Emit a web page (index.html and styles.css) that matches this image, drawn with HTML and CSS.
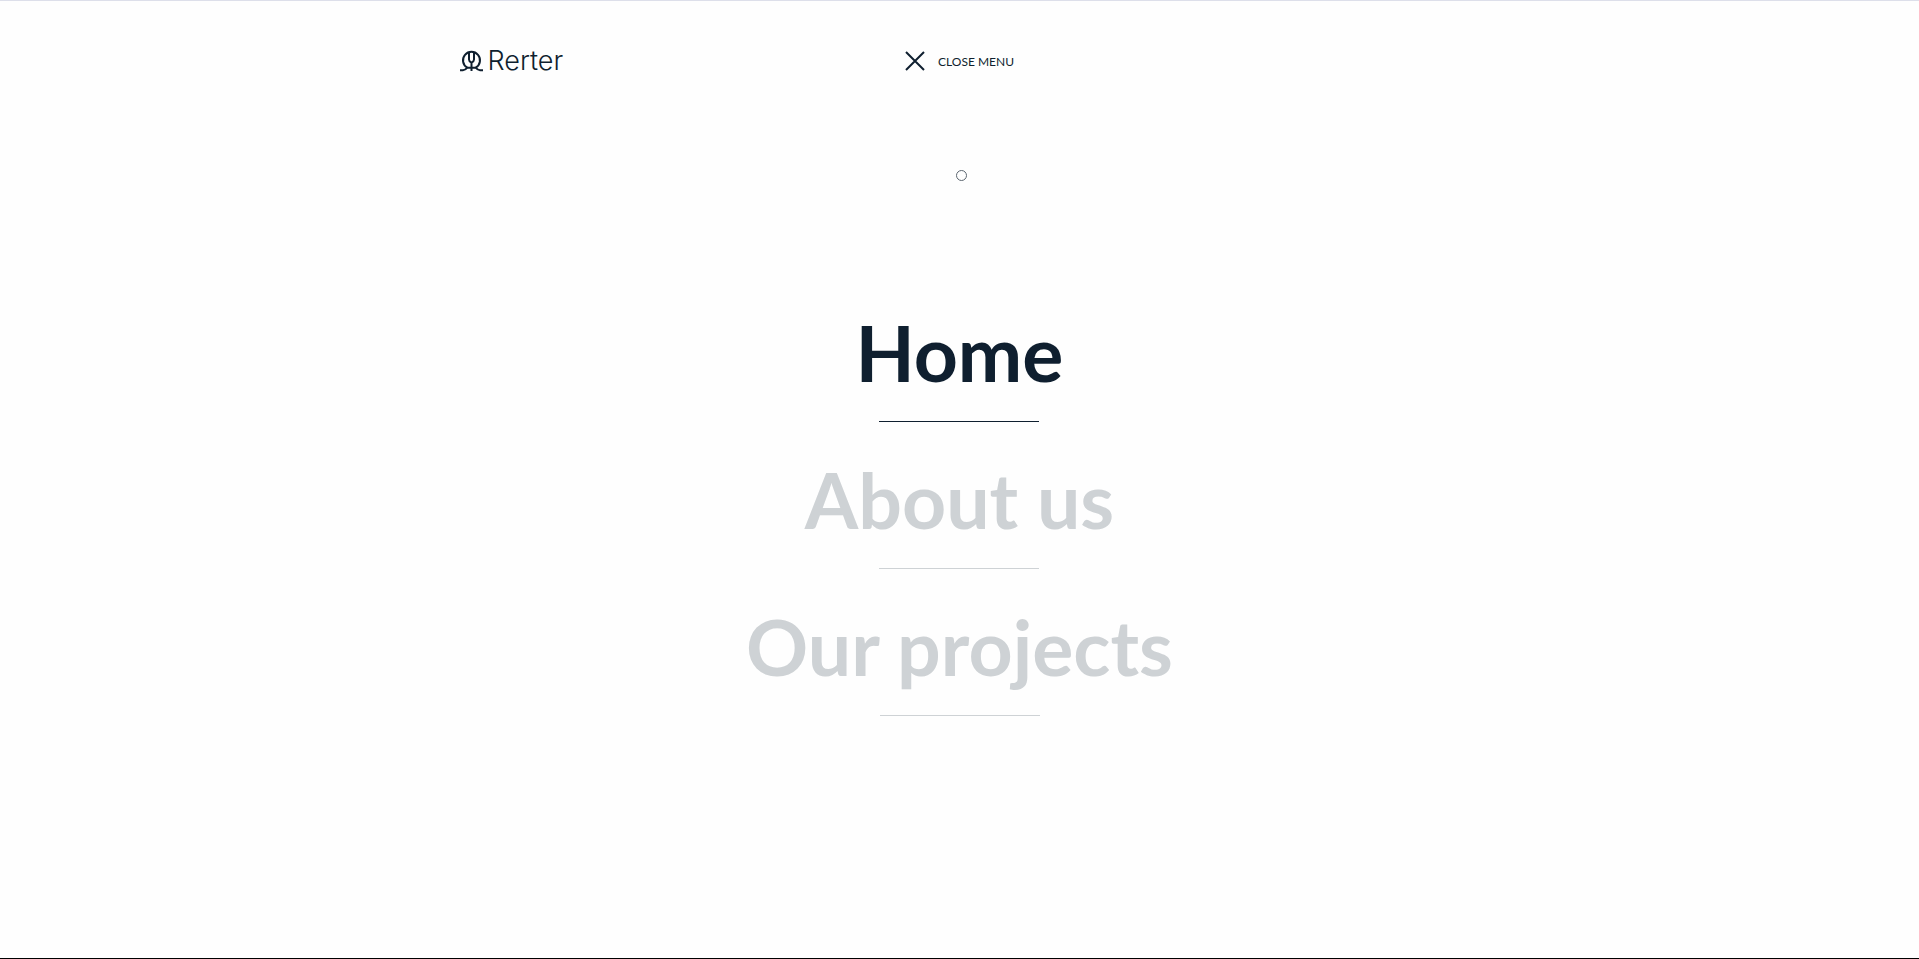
FILE: index.html
```html
<!DOCTYPE html>
<html lang="en">
<head>
<meta charset="utf-8">
<meta name="viewport" content="width=device-width, initial-scale=1">
<title>Rerter</title>
<link rel="stylesheet" href="styles.css">
</head>
<body>
<div class="page">
  <header class="header">
    <a class="logo" href="#">
      <svg class="logo-mark" viewBox="0 0 24 22" aria-hidden="true">
        <path d="M0 20.2H3Q5.2 20.2 7.2 17.6A8.5 8.5 0 1 1 15.8 17.6Q17.8 20.2 20 20.2H23"/>
        <path d="M7.2 17.8H15.8M11.5 12.5V21M9 2.5V9.4Q9 11.4 11.5 12.6Q14 11.4 14 9.4V2.5"/>
      </svg>
      <span class="logo-text">Rerter</span>
    </a>
    <button class="close" type="button">
      <svg class="close-mark" viewBox="0 0 20 20" aria-hidden="true"><path d="M1 1L19 19M19 1L1 19"/></svg>
      <span>CLOSE MENU</span>
    </button>
  </header>
  <nav class="menu" aria-label="Main">
    <a class="menu-link active" href="#">Home</a>
    <a class="menu-link" href="#about">About us</a>
    <a class="menu-link" href="#projects">Our projects</a>
  </nav>
  <span class="cursor" aria-hidden="true"></span>
</div>
</body>
</html>
```
FILE: styles.css
```css
* { box-sizing: border-box; }

body {
  margin: 0;
  background: #fefefe;
  color: #0f1f2f;
  font-family: Lato, "Liberation Sans", sans-serif;
}

.page {
  position: relative;
  min-height: 100vh;
  border-top: 1px solid #dddfea;
  border-bottom: 1px solid #000;
}

.header {
  display: grid;
  grid-template-columns: 1fr auto 1fr;
  align-items: center;
  max-width: 1000px;
  margin: 0 auto;
  padding-top: 44px;
}

.logo {
  display: flex;
  align-items: center;
  gap: 4px;
  color: inherit;
  text-decoration: none;
}

.logo-mark {
  width: 24px;
  height: 22px;
  fill: none;
  stroke: currentColor;
  stroke-width: 2;
}

.logo-text {
  font-family: Inter, "Liberation Sans", sans-serif;
  font-size: 27px;
  font-weight: 300;
  line-height: 32px;
}

.close {
  display: flex;
  align-items: center;
  gap: 13px;
  padding: 0;
  border: 0;
  background: none;
  color: inherit;
  font-family: inherit;
  font-size: 12px;
  cursor: pointer;
}

.close-mark {
  width: 20px;
  height: 20px;
  fill: none;
  stroke: currentColor;
  stroke-width: 2;
}

.menu {
  display: flex;
  flex-direction: column;
  align-items: center;
  gap: 32px;
  margin-top: 230px;
}

.menu-link {
  display: flex;
  flex-direction: column;
  align-items: center;
  gap: 24px;
  color: #ced2d5;
  font-size: 77px;
  font-weight: 700;
  line-height: 90px;
  text-decoration: none;
}

.menu-link::after {
  content: "";
  width: 160px;
  height: 1px;
  background: currentColor;
}

.menu-link.active { color: #0f1f2f; }

.cursor {
  position: absolute;
  top: 169px;
  left: 50%;
  width: 11px;
  height: 11px;
  margin-left: -4px;
  border: 1px solid #5c6670;
  border-radius: 50%;
  pointer-events: none;
}
```
